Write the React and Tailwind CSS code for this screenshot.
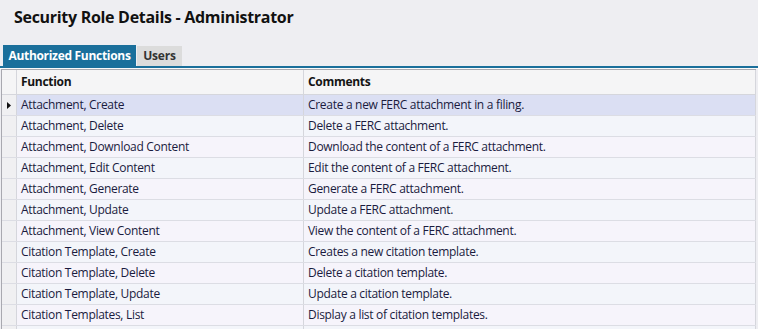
const rows = [
  ['Attachment, Create', 'Create a new FERC attachment in a filing.'],
  ['Attachment, Delete', 'Delete a FERC attachment.'],
  ['Attachment, Download Content', 'Download the content of a FERC attachment.'],
  ['Attachment, Edit Content', 'Edit the content of a FERC attachment.'],
  ['Attachment, Generate', 'Generate a FERC attachment.'],
  ['Attachment, Update', 'Update a FERC attachment.'],
  ['Attachment, View Content', 'View the content of a FERC attachment.'],
  ['Citation Template, Create', 'Creates a new citation template.'],
  ['Citation Template, Delete', 'Delete a citation template.'],
  ['Citation Template, Update', 'Update a citation template.'],
  ['Citation Templates, List', 'Display a list of citation templates.'],
];

export default function App() {
  return (
    <div className="w-[758px] h-[329px] overflow-hidden bg-[#eeeef2] font-['Open_Sans',sans-serif] text-[#1a1b3e]">
      {/* Title */}
      <h1 className="pl-[14px] pt-[5px] h-[45px] text-[16px] font-bold text-[#111] tracking-[-0.3px]">
        Security Role Details - Administrator
      </h1>

      {/* Tabs */}
      <div className="flex items-end pl-[3px] h-[21px]">
        <div className="h-[21px] w-[133px] bg-[#1a6f9b] text-white text-[12px] font-bold flex items-center justify-center tracking-[-0.3px]">
          Authorized Functions
        </div>
        <div className="h-[20px] w-[45px] ml-px bg-[#dcdcdc] text-[#333] text-[12px] font-bold flex items-center justify-center tracking-[-0.2px]">
          Users
        </div>
      </div>
      <div className="h-[2px] bg-[#1a6f9b]" />
      <div className="h-px bg-[#fafafa]" />

      {/* Grid */}
      <div className="border-t border-l border-[#a9a9b0] ml-[1px] mr-[2px] bg-white">
        <div className="flex h-[25px] bg-[#f5f5f6] border-b border-[#d5d6dc] text-[12px] font-bold text-[#141414]">
          <div className="w-[15px] shrink-0 border-r border-[#d5d6dc]" />
          <div className="w-[287px] shrink-0 border-r border-[#d5d6dc] pl-[4px] flex items-center tracking-[-0.3px]">Function</div>
          <div className="flex-1 border-r border-[#d5d6dc] pl-[4px] flex items-center tracking-[-0.3px]">Comments</div>
        </div>
        {rows.map(([fn, comment], i) => (
          <div
            key={fn}
            className={
              'flex h-[21px] border-b border-[#dcdde4] text-[12px] tracking-[-0.3px] ' +
              (i === 0 ? 'bg-[#dbdff3]' : i % 2 === 1 ? 'bg-[#f3f5fa]' : 'bg-[#f6f4fb]')
            }
          >
            <div className="w-[15px] shrink-0 border-r border-[#d5d6dc] bg-[#f0f0f2] flex items-center justify-center">
              {i === 0 && (
                <svg width="4" height="7" viewBox="0 0 4 7">
                  <path d="M0 0 L4 3.5 L0 7 Z" fill="#111" />
                </svg>
              )}
            </div>
            <div className="w-[287px] shrink-0 border-r border-[#d5d6dc] pl-[4px] flex items-center whitespace-nowrap">{fn}</div>
            <div className="flex-1 border-r border-[#d5d6dc] pl-[4px] flex items-center whitespace-nowrap">{comment}</div>
          </div>
        ))}
        {/* next row, cut off by the window */}
        <div className="flex h-[21px] bg-[#f3f5fa]">
          <div className="w-[15px] shrink-0 border-r border-[#d5d6dc] bg-[#f0f0f2]" />
          <div className="w-[287px] shrink-0 border-r border-[#d5d6dc]" />
          <div className="flex-1 border-r border-[#d5d6dc]" />
        </div>
      </div>
    </div>
  );
}
